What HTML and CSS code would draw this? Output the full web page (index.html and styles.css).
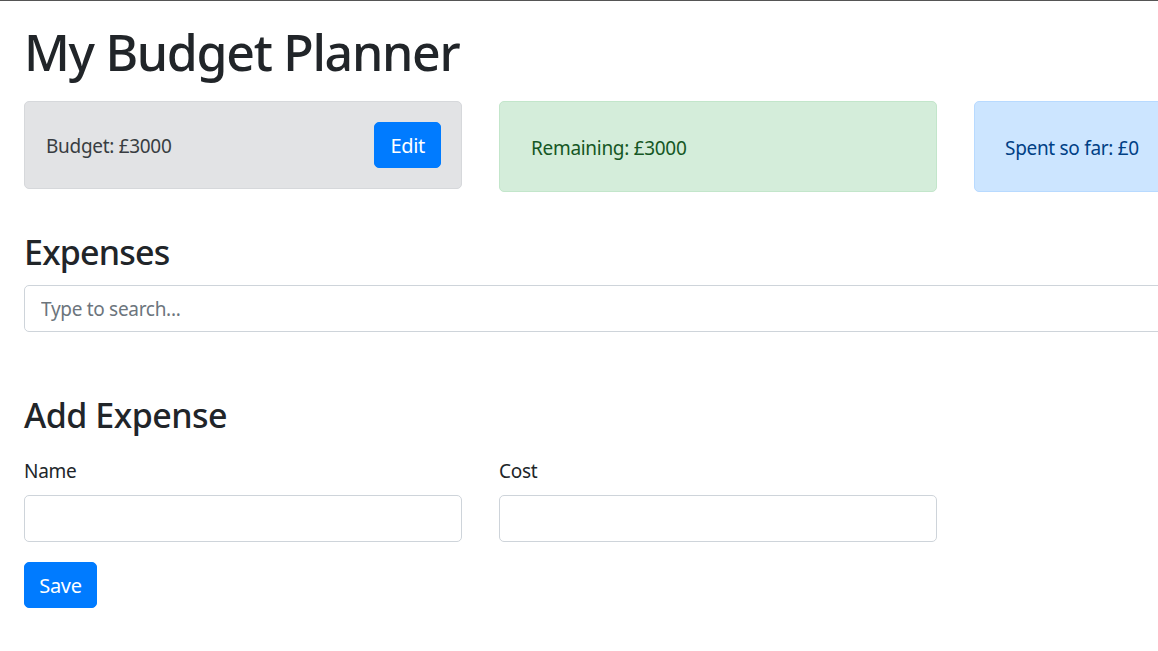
FILE: index.html
```html
<!DOCTYPE html>
<html lang="en">
<head>
<meta charset="utf-8">
<title>My Budget Planner</title>
<link rel="stylesheet" href="styles.css">
</head>
<body>
<div class="page">
  <h1 class="title">My Budget Planner</h1>
  <div class="summary">
    <div class="card card-budget">
      <span class="card-text">Budget: £3000</span>
      <button class="btn" type="button">Edit</button>
    </div>
    <div class="card card-remaining"><span>Remaining: £3000</span></div>
    <div class="card card-spent"><span>Spent so far: £0</span></div>
  </div>

  <h3 class="section-title expenses-title">Expenses</h3>
  <input class="field search" type="text" placeholder="Type to search...">

  <h3 class="section-title add-title">Add Expense</h3>
  <form class="add-form">
    <div class="form-row">
      <div class="form-col">
        <label class="label" for="name">Name</label>
        <input class="field" id="name" type="text">
      </div>
      <div class="form-col">
        <label class="label" for="cost">Cost</label>
        <input class="field" id="cost" type="text">
      </div>
    </div>
    <button class="btn save" type="button">Save</button>
  </form>
</div>
</body>
</html>
```

FILE: styles.css
```css
html, body {
  margin: 0;
  padding: 0;
  overflow: hidden;
}

body {
  border-top: 1px solid #555;
  font-family: "Noto Sans", "Open Sans", sans-serif;
  font-size: 20px;
  line-height: 1.5;
  color: #212529;
  background: #fff;
}

.page {
  padding: 0 24px;
  width: 1388px;
}

.title {
  font-size: 50px;
  font-weight: 500;
  line-height: 1.2;
  margin: 21px 0 19px;
  letter-spacing: -1.3px;
}

.summary {
  display: flex;
  gap: 37px;
  align-items: flex-start;
}

.card {
  box-sizing: border-box;
  width: 438px;
  flex: 0 0 438px;
  border: 1px solid transparent;
  border-radius: 5px;
  font-size: 19px;
  letter-spacing: -0.3px;
}

.card-budget {
  display: flex;
  align-items: center;
  justify-content: space-between;
  padding: 20px 20px 20px 21px;
  height: 88px;
  background: #e2e3e5;
  border-color: #d6d8db;
  color: #383d41;
}

.card-text {
  padding-top: 3px;
}

.card-remaining {
  padding: 32px 30px 28px 31px;
  line-height: 29px;
  background: #d4edda;
  border-color: #c3e6cb;
  color: #155724;
}

.card-spent {
  padding: 32px 30px 28px 30px;
  line-height: 29px;
  background: #cce5ff;
  border-color: #b8daff;
  color: #004085;
}

.btn {
  font-family: inherit;
  font-size: 20px;
  line-height: 30px;
  height: 46px;
  padding: 2px 15px 0;
  border: 1px solid #007bff;
  border-radius: 5px;
  background: #007bff;
  color: #fff;
  cursor: pointer;
  letter-spacing: -0.3px;
}

.section-title {
  font-size: 34px;
  font-weight: 500;
  line-height: 1.2;
  letter-spacing: -0.8px;
}

.expenses-title {
  margin: 40px 0 12px;
}

.add-title {
  margin: 63px 0 19px;
  letter-spacing: -0.5px;
}

.field {
  display: block;
  box-sizing: border-box;
  width: 100%;
  height: 47px;
  padding: 2px 16px 0;
  border: 1px solid #ced4da;
  border-radius: 5px;
  font-family: inherit;
  font-size: 19px;
  color: #495057;
  background: #fff;
  letter-spacing: -0.3px;
}

.field::placeholder {
  color: #6c757d;
}

.add-form {
  margin: 0;
}

.form-row {
  display: flex;
  gap: 37px;
}

.form-col {
  width: 438px;
}

.label {
  display: block;
  font-size: 19px;
  line-height: 30px;
  padding-top: 1px;
  margin-bottom: 9px;
  letter-spacing: -0.3px;
}

.save {
  margin-top: 20px;
  width: 73px;
  padding: 2px 0 0;
}
```
